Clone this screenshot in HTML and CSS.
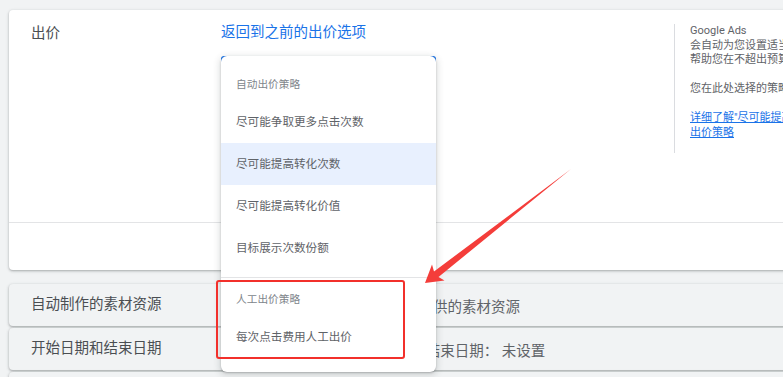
FILE: index.html
```html
<!DOCTYPE html>
<html lang="zh-CN">
  <head>
    <meta charset="UTF-8" />
    <meta name="viewport" content="width=device-width, initial-scale=1.0" />
    <title>出价</title>
    <link rel="stylesheet" href="styles.css">
  </head>
  <body>
    <div class="page">
      <div class="card">
        <div class="card-body">
          <div class="label">出价</div>
          <div class="content">
            <a class="back-link" href="#">返回到之前的出价选项</a>
            <div class="select-wrap">
              <div class="select-box"></div>
              <div class="menu">
                <div class="menu-group">
                  <div class="menu-header">自动出价策略</div>
                  <div class="menu-item">尽可能争取更多点击次数</div>
                  <div class="menu-item active">尽可能提高转化次数</div>
                  <div class="menu-item">尽可能提高转化价值</div>
                  <div class="menu-item">目标展示次数份额</div>
                </div>
                <div class="menu-group last">
                  <div class="menu-header">人工出价策略</div>
                  <div class="menu-item">每次点击费用人工出价</div>
                </div>
              </div>
            </div>
          </div>
          <div class="help">
            <p>Google Ads</p>
            <p>会自动为您设置适当的出价，</p>
            <p>帮助您在不超出预算的情况下</p>
            <p>&nbsp;</p>
            <p>您在此处选择的策略将会影响</p>
            <p>&nbsp;</p>
            <p><a href="#">详细了解"尽可能提高转化次数"</a></p>
            <p><a href="#">出价策略</a></p>
          </div>
        </div>
        <div class="card-footer"></div>
      </div>

      <div class="row first">
        <div class="label">自动制作的素材资源</div>
        <div class="summary">使用自动制作的素材资源和您提供的素材资源</div>
      </div>
      <div class="row">
        <div class="label">开始日期和结束日期</div>
        <div class="summary">开始日期：2021年10月10日，结束日期： 未设置</div>
      </div>
      <div class="row">
        <div class="label">网址选项</div>
        <div class="summary">未设置任何选项</div>
      </div>
    </div>

    <svg class="marks" width="783" height="377" viewBox="0 0 783 377">
      <rect x="217" y="281" width="187" height="77" rx="2" fill="none" stroke="#f2302b" stroke-width="2"/>
      <polygon fill="#f43d3a" points="425,283 432,264.5 434,271.5 571,169 438.5,277 444.5,280.5"/>
    </svg>
  </body>
</html>
```

FILE: styles.css
```css
html, body {
  margin: 0;
  padding: 0;
  overflow: hidden;
}
body {
  font-family: Roboto, "Noto Sans CJK SC", sans-serif;
  background-color: #f1f3f4;
  color: #3c4043;
  width: 783px;
  height: 377px;
  position: relative;
}
.page {
  width: 1000px;
  padding: 10px 0 0 9px;
}
.card {
  background: #fff;
  border-radius: 4px;
  box-shadow: 0 1px 2px rgba(60, 64, 67, .3), 0 1px 3px 1px rgba(60, 64, 67, .1);
  position: relative;
  z-index: 2;
}
.card-body {
  display: grid;
  grid-template-columns: 190px 453px 260px;
  height: 213px;
  padding-left: 22px;
  border-bottom: 1px solid #e3e4e6;
  box-sizing: border-box;
}
.card-footer {
  height: 47px;
}
.label {
  font-size: 14.5px;
  line-height: 20px;
  color: #4a4e52;
}
.card-body .label {
  padding-top: 14px;
}
.content {
  padding-top: 13px;
}
.back-link {
  display: block;
  font-size: 14.5px;
  line-height: 20px;
  color: #1a73e8;
  text-decoration: none;
}
.select-wrap {
  position: relative;
  width: 215px;
  margin-top: 13px;
}
.select-box {
  height: 52px;
  border: 2px solid #1a73e8;
  border-radius: 3px;
  box-sizing: border-box;
}
.menu {
  position: absolute;
  top: 0;
  left: 0;
  width: 215px;
  background: #fff;
  border-radius: 6px;
  box-shadow: 0 2px 6px 2px rgba(60, 64, 67, .15), 0 1px 2px rgba(60, 64, 67, .3);
  padding: 8px 0 14px;
  z-index: 5;
}
.menu-group {
  padding-bottom: 8px;
  border-bottom: 1px solid #e3e4e6;
}
.menu-group.last {
  padding-bottom: 0;
  border-bottom: none;
}
.menu-header {
  padding: 13px 15px 8px;
  font-size: 10.7px;
  line-height: 16px;
  color: #80868b;
}
.menu-group.last .menu-header {
  padding-top: 14px;
}
.menu-item {
  height: 42px;
  line-height: 42px;
  padding-left: 15px;
  font-size: 11.6px;
  color: #5f6368;
}
.menu-item.active {
  background: #e8f0fe;
}
.help {
  margin-top: 14px;
  height: 129px;
  border-left: 1px solid #dadce0;
  padding-left: 15px;
  box-sizing: border-box;
}
.help p {
  margin: 0;
  font-size: 11px;
  line-height: 14.5px;
  color: #5f6368;
  white-space: nowrap;
}
.help a {
  color: #1a73e8;
  text-decoration: underline;
}
.row {
  display: grid;
  grid-template-columns: 190px 700px;
  align-items: center;
  height: 42px;
  padding-left: 22px;
  margin-bottom: 2px;
  background: #f1f3f4;
  border-radius: 4px;
  box-shadow: 0 1px 2px rgba(60, 64, 67, .3), 0 1px 3px 1px rgba(60, 64, 67, .12);
}
.row.first {
  margin-top: 14px;
}
.summary {
  padding-left: 9px;
  font-size: 14.5px;
  color: #5f6368;
  white-space: nowrap;
}
.marks {
  position: absolute;
  top: 0;
  left: 0;
  z-index: 10;
  pointer-events: none;
}
```
